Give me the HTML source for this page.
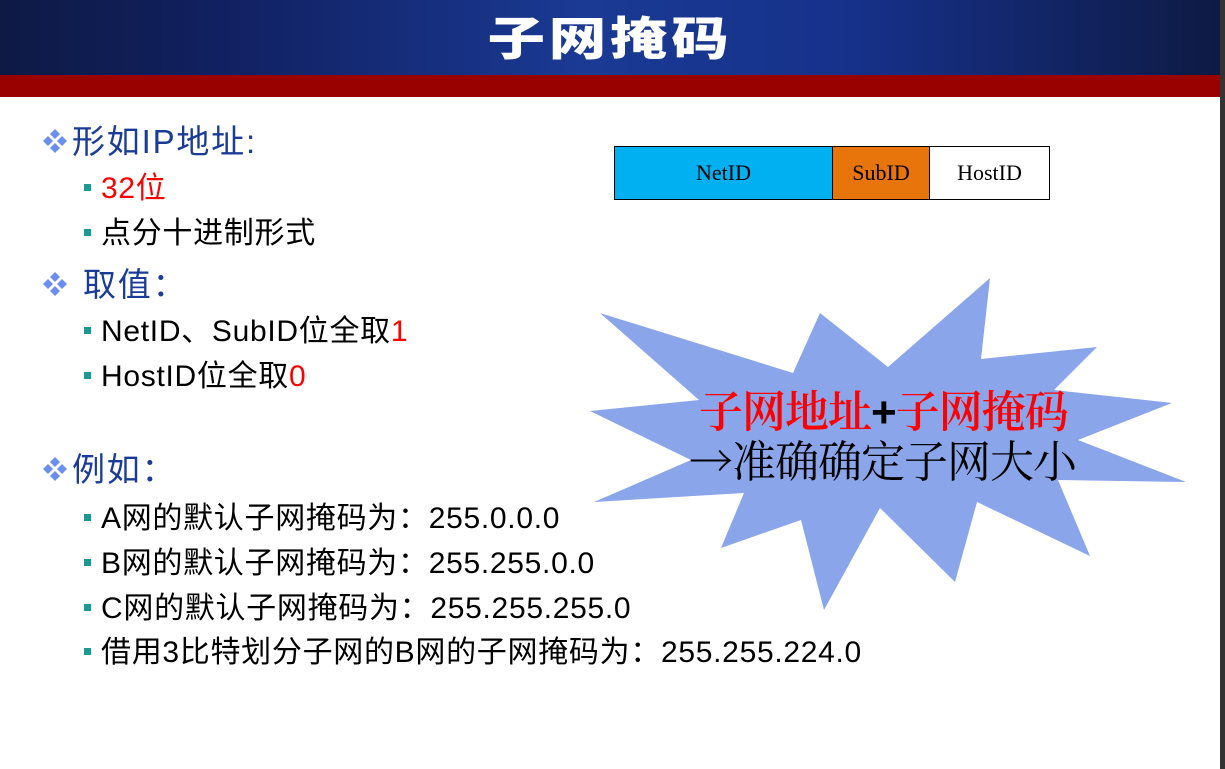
<!DOCTYPE html>
<html><head><meta charset="utf-8"><style>
body{margin:0;width:1225px;height:769px;overflow:hidden;background:#fff;position:relative;font-family:"Liberation Sans","Noto Sans CJK SC",sans-serif}
.hd{position:absolute;left:0;top:0;width:1220px;height:75px;background:linear-gradient(90deg,#0e1a44 0%,#112060 18%,#1a3a94 48%,#16318a 70%,#0e1a44 100%)}
.red{position:absolute;left:0;top:75px;width:1220px;height:22px;background:#990000}
.sb{position:absolute;left:1220px;top:0;width:5px;height:769px;background:#333}
.title{position:absolute;left:0;width:1220px;top:3px;text-align:center;color:#fff;font:900 46px "Noto Sans CJK SC",sans-serif;letter-spacing:3px;transform:scaleX(1.25);transform-origin:610px 0}
.t{position:absolute;white-space:nowrap;line-height:1;z-index:2}
.l1{font-size:33px;color:#1b3c96;letter-spacing:1.8px}
.l2{font-size:30px;color:#000;letter-spacing:0.7px}
.sq{position:absolute;width:7px;height:7px;background:#1a9a96}
.dm{position:absolute;width:30px;height:30px}
.r{color:#f00}
table{position:absolute;left:614px;top:146px;border-collapse:collapse;font:22px "Liberation Serif",serif}
td{border:1px solid #000;height:52px;text-align:center;padding:0}
</style></head><body>
<div class="hd"></div><div class="red"></div><div class="sb"></div>
<div class="title">子网掩码</div>

<svg style="position:absolute;left:0;top:0;z-index:1" width="1225" height="769"><polygon fill="#8aa5ea" points="600,313 793,373 820,313 888,367 990,278 981,359 1097,347 1054,390 1172,403 1078,440 1186,482 1058,480 1090,556 977,502 955,582 880,508 824,610 801,520 721,548 744,493 594,502 691,460 590,411 699,400"/></svg>

<svg class="dm" style="left:40px;top:126px" viewBox="0 0 30 30"><g fill="#6a8ff0"><path d="M15 3l5 5-5 5-5-5z"/><path d="M15 17l5 5-5 5-5-5z"/><path d="M8 10l5 5-5 5-5-5z"/><path d="M22 10l5 5-5 5-5-5z"/></g></svg>
<div class="t l1" style="left:72px;top:125px">形如IP地址:</div>
<div class="sq" style="left:84px;top:184px"></div><div class="t l2 r" style="left:101px;top:174px">32位</div>
<div class="sq" style="left:84px;top:229px"></div><div class="t l2" style="left:101px;top:219px">点分十进制形式</div>
<svg class="dm" style="left:40px;top:269px" viewBox="0 0 30 30"><g fill="#6a8ff0"><path d="M15 3l5 5-5 5-5-5z"/><path d="M15 17l5 5-5 5-5-5z"/><path d="M8 10l5 5-5 5-5-5z"/><path d="M22 10l5 5-5 5-5-5z"/></g></svg>
<div class="t l1" style="left:83px;top:268px">取值：</div>
<div class="sq" style="left:84px;top:327px"></div><div class="t l2" style="left:101px;top:317px">NetID、SubID位全取<span class="r">1</span></div>
<div class="sq" style="left:84px;top:372px"></div><div class="t l2" style="left:101px;top:362px">HostID位全取<span class="r">0</span></div>
<svg class="dm" style="left:40px;top:454px" viewBox="0 0 30 30"><g fill="#6a8ff0"><path d="M15 3l5 5-5 5-5-5z"/><path d="M15 17l5 5-5 5-5-5z"/><path d="M8 10l5 5-5 5-5-5z"/><path d="M22 10l5 5-5 5-5-5z"/></g></svg>
<div class="t l1" style="left:72px;top:453px">例如：</div>
<div class="sq" style="left:84px;top:514px"></div><div class="t l2" style="left:101px;top:504px">A网的默认子网掩码为：255.0.0.0</div>
<div class="sq" style="left:84px;top:559px"></div><div class="t l2" style="left:101px;top:549px">B网的默认子网掩码为：255.255.0.0</div>
<div class="sq" style="left:84px;top:604px"></div><div class="t l2" style="left:101px;top:594px">C网的默认子网掩码为：255.255.255.0</div>
<div class="sq" style="left:84px;top:648px"></div><div class="t l2" style="left:101px;top:638px">借用3比特划分子网的B网的子网掩码为：255.255.224.0</div>

<table><tr><td style="width:217px;background:#00b0f0">NetID</td><td style="width:96px;background:#e8740c">SubID</td><td style="width:119px;background:#fff">HostID</td></tr></table>

<div class="t" style="left:699px;top:376px;font:600 44px 'Noto Serif CJK SC',serif;color:#f00;letter-spacing:-1px">子网地址<b style="color:#000;font-family:'Liberation Sans'">+</b>子网掩码</div>
<div class="t" style="left:689px;top:426px;font:44px 'Noto Serif CJK SC',serif;color:#000;letter-spacing:-1px">→准确确定子网大小</div>
</body></html>
